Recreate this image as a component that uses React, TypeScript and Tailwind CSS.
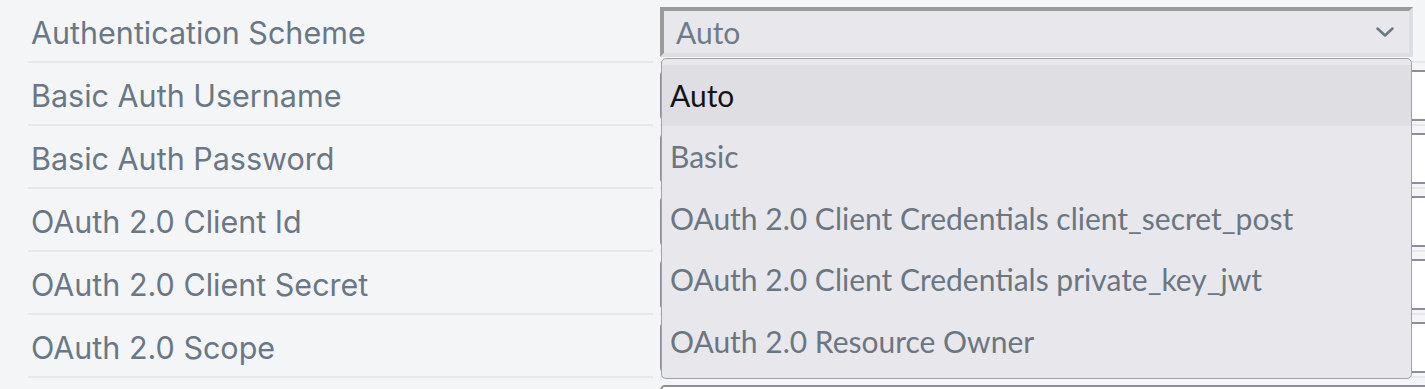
const fields = [
  "Authentication Scheme",
  "Basic Auth Username",
  "Basic Auth Password",
  "OAuth 2.0 Client Id",
  "OAuth 2.0 Client Secret",
  "OAuth 2.0 Scope",
  "",
];

const options = [
  "Auto",
  "Basic",
  "OAuth 2.0 Client Credentials client_secret_post",
  "OAuth 2.0 Client Credentials private_key_jwt",
  "OAuth 2.0 Resource Owner",
];

function SchemeSelect() {
  return (
    <div className="relative w-[753px]">
      <div className="flex h-[50px] items-center justify-between border-[4px] border-t-[#9b9b9b] border-l-[#9b9b9b] border-r-[#dedde2] border-b-[#dedde2] bg-[#e8e7ec] pl-3 pr-[15px]">
        <span className="font-['Lato',sans-serif] text-[30px] leading-none text-[#6e7c87]">Auto</span>
        <svg width="18" height="10" viewBox="0 0 18 10" fill="none">
          <polyline points="1.5,1.5 9,8.5 16.5,1.5" stroke="#6b7883" strokeWidth="2.5" strokeLinecap="round" strokeLinejoin="round" />
        </svg>
      </div>
      <div className="absolute left-[1px] top-[51px] z-10 w-[751px] rounded-[5px] border border-[#a3a2aa] bg-[#e8e7ec] py-[6px]">
        {options.map((o, i) => (
          <div
            key={o}
            className={
              i === 0
                ? "flex h-[61px] items-center bg-[#dfdee3] pl-[8px] font-['Lato',sans-serif] text-[30px] text-[#141414]"
                : "flex h-[61.5px] items-center pl-[8px] font-['Lato',sans-serif] text-[30px] text-[#6b7681]"
            }
          >
            {o}
          </div>
        ))}
      </div>
    </div>
  );
}

export default function App() {
  return (
    <div className="h-[389px] w-[1425px] overflow-hidden bg-[#f4f5f7] pl-[28px]">
      {fields.map((f, i) => (
        <div key={i} className="flex h-[63px]">
          <div className="flex w-[625px] shrink-0 items-start border-b-2 border-[#e6e7ea] pt-[7px] pl-[3px]">
            <div className="flex h-[51px] items-center font-['Inter',sans-serif] text-[30.5px] text-[#6a7784]">{f}</div>
          </div>
          <div className="ml-[7px] min-w-0 flex-1 border-b-2 border-[#e6e7ea] pt-[7px]">
            {i === 0 ? (
              <SchemeSelect />
            ) : (
              <div className="h-[51px] w-[820px] rounded-[5px] border-2 border-[#8f8d9b] bg-white" />
            )}
          </div>
        </div>
      ))}
    </div>
  );
}
